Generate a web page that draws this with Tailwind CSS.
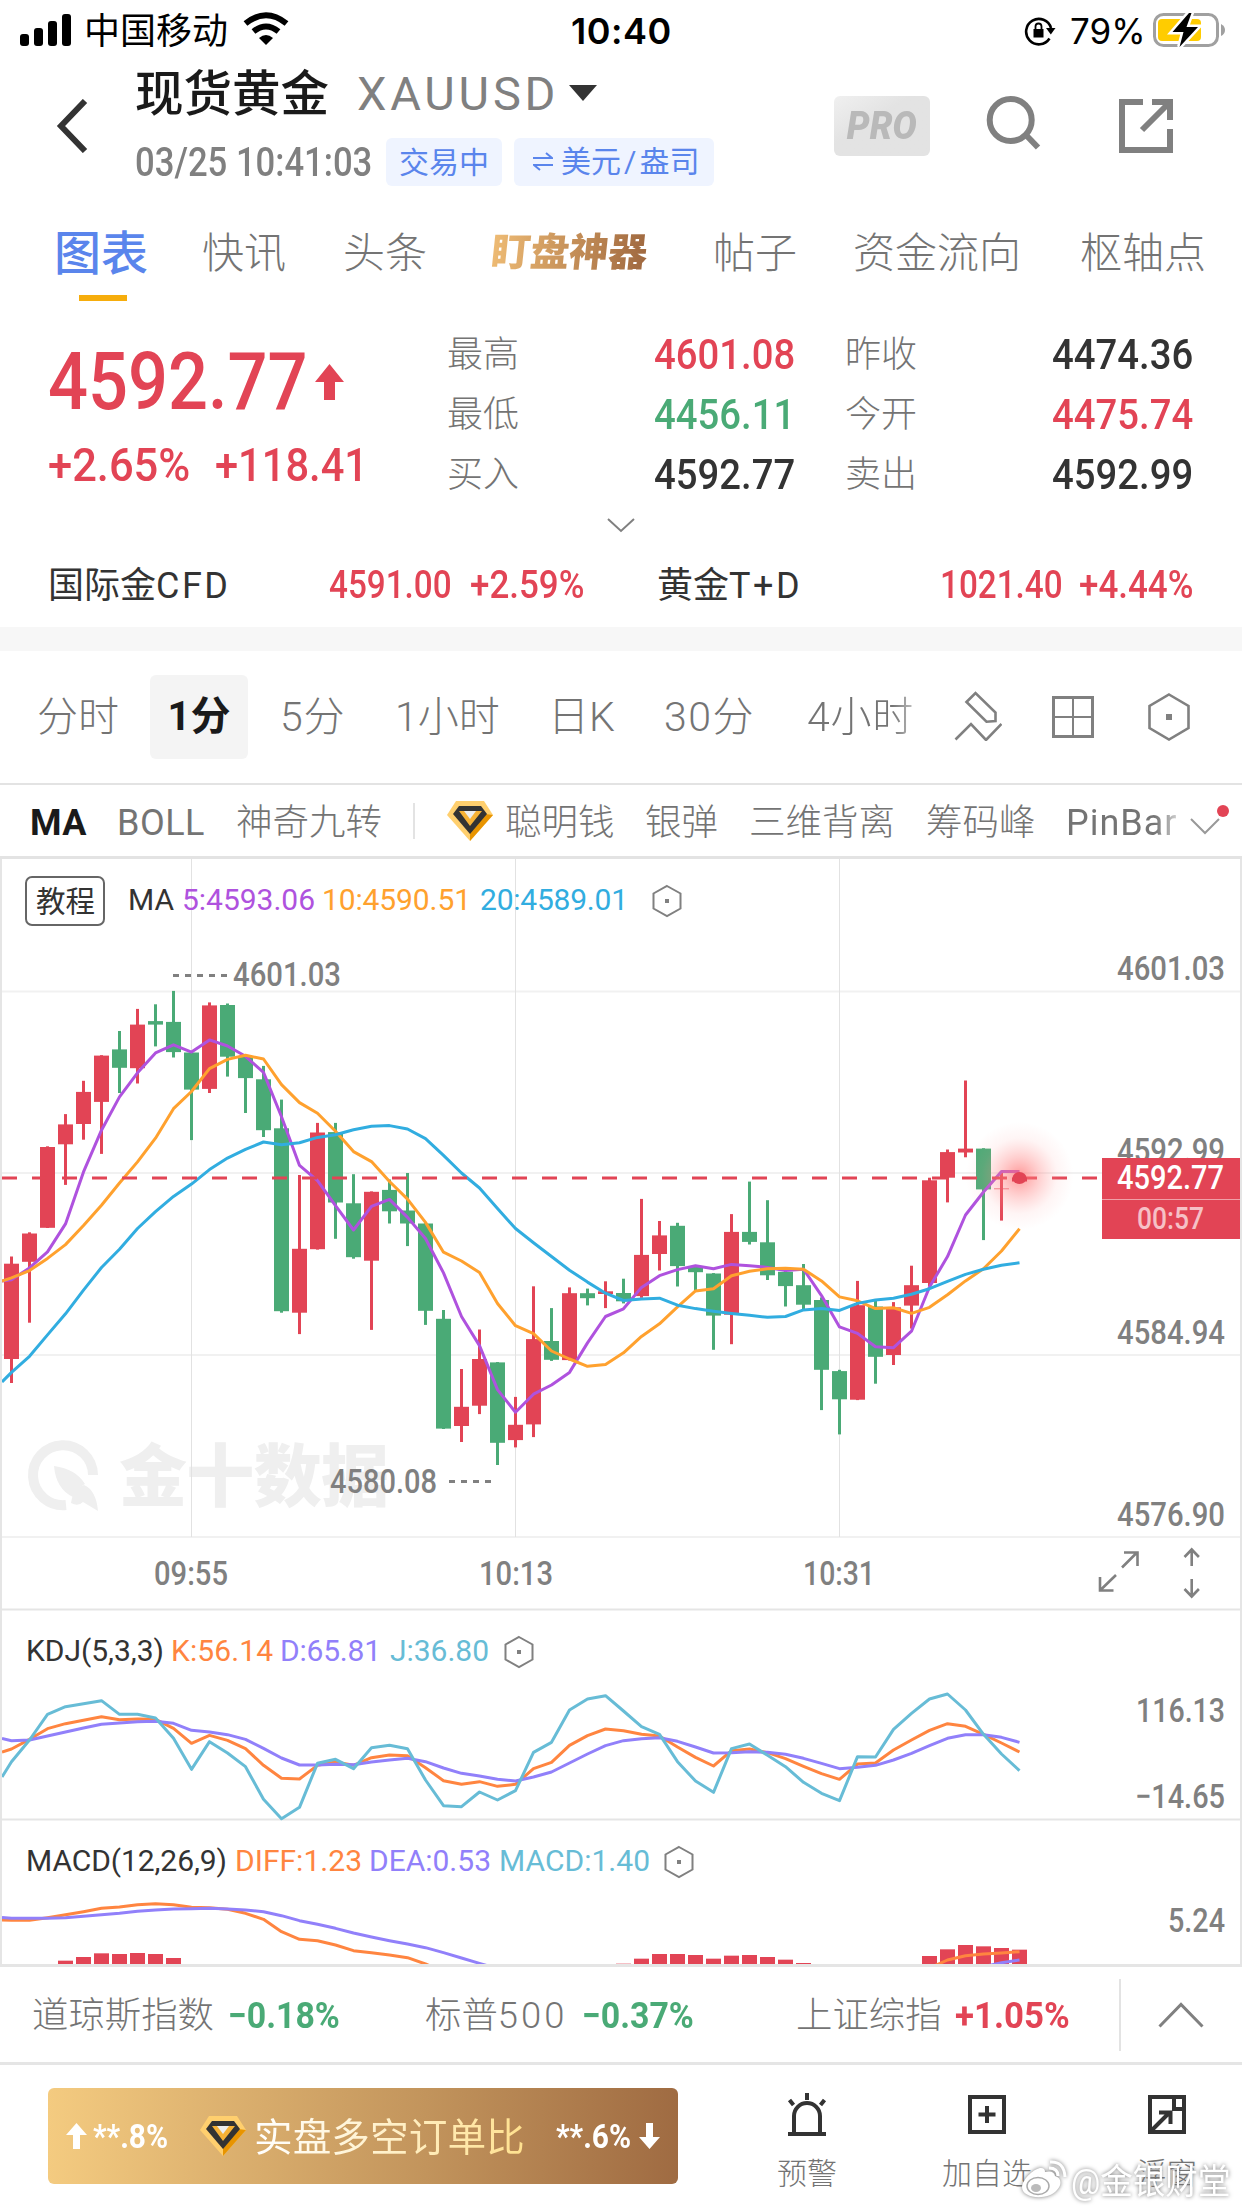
<!DOCTYPE html>
<html lang="zh-CN">
<head>
  <meta charset="UTF-8">
  <meta name="viewport" content="width=device-width, initial-scale=1.0">
  <title>现货黄金 XAUUSD</title>
  <script src="https://cdn.jsdelivr.net/npm/@tailwindcss/browser@4"></script>
</head>
<body class="bg-white w-[1242px] h-[2208px] overflow-hidden whitespace-nowrap text-[#808080] font-['Roboto','Noto_Sans_CJK_SC',sans-serif]">

  <!-- Status bar -->
  <div class="h-[62px] flex items-center text-black">
    <svg class="w-[51px] h-8 ml-5 -mt-0.5" viewBox="0 0 51 32">
      <rect x="0" y="20" width="9" height="12" rx="3"/><rect x="14" y="14" width="9" height="18" rx="3"/>
      <rect x="28" y="7" width="9" height="25" rx="3"/><rect x="42" y="0" width="9" height="32" rx="3"/>
    </svg>
    <span class="w-[144px] ml-[13px] mt-0.5 text-[36px] leading-[62px]">中国移动</span>
    <svg class="w-[46px] h-[34px] ml-[15px] -mt-1" viewBox="0 0 46 34" fill="none" stroke="#000" stroke-width="6">
      <path d="M2.500 11.500Q23 -5 43.500 11.500"/><path d="M10.500 19.500Q23 9.500 35.500 19.500"/><path d="M16 26Q23 20 30 26L23 33Z" fill="#000" stroke="none"/>
    </svg>
    <span class="w-[100px] ml-[282px] text-[36px] font-semibold font-['Inter'] tracking-[.5px]">10:40</span>
    <svg class="w-8 h-[30px] ml-[353px]" viewBox="0 0 32 30" fill="none" stroke="#000" stroke-width="2.600">
      <path d="M25.500 22.500A12.700 12.700 0 1 1 27 12"/><path d="M22 12h9.500l-4.700 6.500z" fill="#000" stroke="none"/>
      <rect x="9.500" y="13" width="10" height="8.500" fill="#000" stroke="none"/><path d="M11.500 13v-2.500a3 3 0 0 1 6 0V13" stroke-width="1.800"/>
    </svg>
    <span class="w-[76px] ml-[14px] text-[35px] font-['Inter']">79%</span>
    <svg class="w-[74px] h-9 ml-[6px] -mt-0.5" viewBox="0 0 74 36">
      <rect x="2.500" y="2.500" width="63" height="31" rx="9" fill="none" stroke="#a0a0a0" stroke-width="3"/>
      <path d="M69 12q4 2 4 6t-4 6z" fill="#a0a0a0"/>
      <rect x="6" y="7" width="43" height="22" rx="4" fill="#ffcc00"/>
      <path d="M37 1L20.500 20h11L27.500 35 46 15H34.500L39.500 1z" fill="#000" stroke="#fff" stroke-width="5" paint-order="stroke"/>
    </svg>
  </div>

  <!-- Header -->
  <header class="h-[134px] flex">
    <svg class="w-8 h-[54px] ml-[56px] mt-[37px]" viewBox="0 0 32 54"><path d="M29 2L5 27l24 25" fill="none" stroke="#333" stroke-width="6"/></svg>
    <div class="w-[600px] ml-[47px]">
      <div class="flex items-center h-[62px]">
        <span class="w-[222px] pt-1 text-[48.500px] font-medium text-[#1a1a1a]">现货黄金</span>
        <span class="w-[212px] pt-0.5 text-[47px] tracking-[3.800px] font-normal">XAUUSD</span>
        <svg class="w-7 h-4" viewBox="0 0 28 16"><path d="M0 0h28L14 16z" fill="#333"/></svg>
      </div>
      <div class="flex items-center h-[48px] mt-[14px]">
        <span class="w-[251px] pt-0.5 origin-left scale-x-[.866] text-[40px] font-medium">03/25 10:41:03</span>
        <span class="w-[116px] h-12 rounded-md bg-[#eff4ff] text-[#5a85ec] text-[30px] leading-[50px] text-center">交易中</span>
        <span class="w-[200px] h-12 ml-3 rounded-md bg-[#eff4ff] text-[#5a85ec] text-[30px] leading-[50px] flex items-center">
          <svg class="w-5 h-5 ml-[19px] mr-[8px]" viewBox="0 0 20 20" fill="none" stroke="#5a85ec" stroke-width="2"><path d="M0 6h19l-6-5M20 13H1l6 5"/></svg>美元<span class="mx-[3px]">/</span>盎司
        </span>
      </div>
    </div>
    <div class="w-24 h-[60px] mt-[34px] ml-[99px] rounded-md bg-linear-to-br from-[#f0f0f0] via-[#e3e3e3] via-40% to-[#e3e3e3] text-[#b9b9b9] text-[38px] leading-[60px] text-center"><span class="inline-block scale-x-95 font-black italic">PRO</span></div>
    <svg class="w-[56px] h-[56px] ml-[56px] mt-[33px]" viewBox="0 0 56 56" fill="none" stroke="#808080" stroke-width="6"><circle cx="24.700" cy="25" r="21"/><path d="M39.500 39.500L52 52.500"/></svg>
    <svg class="w-[54px] h-[54px] ml-[77px] mt-[37px]" viewBox="0 0 54 54" fill="none" stroke="#808080" stroke-width="6"><path d="M24 3H3v48h48V30M33 3h18v18M23 31L50 4"/></svg>
  </header>

  <!-- Tabs -->
  <nav class="h-[104px] flex text-[42px] font-light leading-[115px] text-[#747474]">
    <div class="w-[146px] pl-[54px]">
      <span class="text-[47px] font-medium text-[#5a85ec]">图表</span>
      <div class="w-12 h-1.5 ml-[25px] -mt-[18px] bg-[#f6ad0c]"></div>
    </div>
    <span class="w-[84px] ml-[56px]">快讯</span>
    <span class="w-[84px] ml-[57px]">头条</span>
    <span class="w-[165px] ml-[65px] text-[39px] font-black -skew-x-6 bg-linear-to-r from-[#eebb74] to-[#9b643d] bg-clip-text text-transparent">盯盘神器</span>
    <span class="w-[84px] ml-[56px]">帖子</span>
    <span class="w-[168px] ml-[56px]">资金流向</span>
    <span class="w-[126px] ml-[59px]">枢轴点</span>
  </nav>

  <!-- Quote -->
  <section class="h-[242px] flex pt-[24px] text-[#e24455]">
    <div class="w-[447px] pl-[48px]">
      <div class="flex h-[116px] items-center">
        <span class="w-[267px] origin-left scale-x-[.88] text-[80px] font-medium">4592.77</span>
        <svg class="w-[29px] h-9" viewBox="0 0 29 36"><path d="M14.500 0L29 18H20v18H9V18H0z" fill="#e24455"/></svg>
      </div>
      <div class="flex h-[50px] items-center text-[46px] font-medium">
        <span class="w-[167px] origin-left scale-x-[.945]">+2.65%</span>
        <span class="w-[150px] origin-left scale-x-[.905]">+118.41</span>
      </div>
    </div>
    <div class="grid grid-cols-[207px_191px_207px_150px] auto-rows-[60px] items-center text-[43px] font-medium">
      <span class="pt-0.5 text-[36px] font-light text-[#747474]">最高</span><span class="origin-left scale-x-[.89]">4601.08</span>
      <span class="pt-0.5 text-[36px] font-light text-[#747474]">昨收</span><span class="origin-left scale-x-[.89] text-[#333]">4474.36</span>
      <span class="pt-0.5 text-[36px] font-light text-[#747474]">最低</span><span class="origin-left scale-x-[.89] text-[#4aaa76]">4456.11</span>
      <span class="pt-0.5 text-[36px] font-light text-[#747474]">今开</span><span class="origin-left scale-x-[.89]">4475.74</span>
      <span class="pt-0.5 text-[36px] font-light text-[#747474]">买入</span><span class="origin-left scale-x-[.89] text-[#333]">4592.77</span>
      <span class="pt-0.5 text-[36px] font-light text-[#747474]">卖出</span><span class="origin-left scale-x-[.89] text-[#333]">4592.99</span>
    </div>
  </section>
  <div class="h-[85px] pt-0.5 flex items-center relative text-[38px] font-medium text-[#e24455]">
    <svg class="w-7 h-[15px] absolute left-[607px] -top-[24px]" viewBox="0 0 28 15"><path d="M1 1l13 12L27 1" fill="none" stroke="#808080" stroke-width="2"/></svg>
    <span class="w-[281px] ml-[48px] text-[36px] font-normal text-[#333]">国际金<span class="tracking-[2.500px]">CFD</span></span>
    <span class="w-[141px] origin-left scale-x-[.875]">4591.00</span>
    <span class="w-[187px] origin-left scale-x-[.92]">+2.59%</span>
    <span class="w-[283px] text-[36px] font-normal text-[#333]">黄金<span class="tracking-[2.500px]">T+D</span></span>
    <span class="w-[139px] origin-left scale-x-[.875]">1021.40</span>
    <span class="w-[114px] origin-left scale-x-[.92]">+4.44%</span>
  </div>
  <div class="h-6 bg-[#f7f7f7]"></div>

  <!-- Periods -->
  <div class="h-[134px] border-b-2 border-[#e3e3e3] flex items-center text-[41px] font-light text-[#747474]">
    <span class="w-[82px] ml-[37px] pt-0.5">分时</span>
    <span class="w-[98px] h-[84px] ml-[31px] rounded-md bg-[#f4f4f4] text-center leading-[84px] font-bold text-[#1a1a1a] text-[40px]">1分</span>
    <span class="w-[66px] ml-[32px] pt-0.5 tracking-[.8px]">5分</span>
    <span class="w-[106px] ml-[49px] pt-0.5">1小时</span>
    <span class="w-[66px] ml-[47px] pt-0.5">日K</span>
    <span class="w-[94px] ml-[50px] pt-0.5 tracking-[1.500px]">30分</span>
    <span class="w-[114px] ml-[49px] pt-0.5 tracking-[.8px] bg-linear-to-r from-[#747474] from-75% to-[#ddd] bg-clip-text text-transparent">4小时</span>
    <svg class="w-12 h-[50px] ml-[33px] -mt-0.5" viewBox="0 0 48 50" fill="none" stroke="#808080" stroke-width="2.600">
      <path d="M1.500 48.500L17 33l15 16L47.500 33M12.500 11L21.500 2 41.500 21.500V30l-9 .7z"/>
    </svg>
    <svg class="w-[42px] h-[42px] ml-[50px]" viewBox="0 0 42 42" fill="none" stroke="#808080"><path d="M1.500 1.500h39v39h-39z" stroke-width="3"/><path d="M21 2v38M2 21h38" stroke-width="2"/></svg>
    <svg class="w-[42px] h-[48px] ml-[54px]" viewBox="0 0 42 48" fill="none" stroke="#808080" stroke-width="2.600"><path d="M21 1.500L40.500 13v22L21 46.500 1.500 35V13z"/><path d="M18 21h6v6h-6z" fill="#808080" stroke="none"/></svg>
  </div>

  <!-- Indicators -->
  <div class="h-[74px] border-b-3 border-[#e3e3e3] flex items-center text-[36.500px] font-light text-[#747474]">
    <span class="w-[60px] ml-[30px] pt-1 text-[36px] font-bold tracking-[.5px] text-[#1a1a1a]">MA</span>
    <span class="w-[90px] ml-[27px] pt-1 text-[36px] font-normal tracking-[.5px]">BOLL</span>
    <span class="w-[146px] ml-[29px] pt-[5px]">神奇九转</span>
    <span class="w-0.5 h-9 ml-[31px] bg-[#e3e3e3]"></span>
    <svg class="w-[46px] h-10 ml-[32px]" viewBox="0 0 46 40">
      <path d="M9 0h28l9 14-23 26L0 14z" fill="#ffcf6e"/><path d="M46 14L23 40V30L38 13z" fill="#e89400"/>
      <path d="M12 5h22l6 8-17 20L6 13z" fill="#333"/><path d="M12 10h6l5 7 5-7h7L23 25z" fill="#f7b236"/><path d="M17 10h12l-6 8z" fill="#eee"/>
    </svg>
    <span class="w-[110px] ml-[12px] pt-[5px]">聪明钱</span>
    <span class="w-[74px] ml-[30px] pt-[5px]">银弹</span>
    <span class="w-[146px] ml-[30px] pt-[5px]">三维背离</span>
    <span class="w-[110px] ml-[31px] pt-[5px]">筹码峰</span>
    <span class="w-[118px] ml-[30px] pt-1 text-[36px] font-normal tracking-[1px] bg-linear-to-r from-[#747474] from-75% to-[#eee] bg-clip-text text-transparent">PinBar</span>
    <svg class="w-[40px] h-[32px] ml-[6px] -mt-2.500" viewBox="0 0 40 32"><path d="M1 14l14 14 14-14" fill="none" stroke="#999" stroke-width="2"/><circle cx="33" cy="6" r="6" fill="#e24455"/></svg>
  </div>

  <!-- Charts: price, KDJ, MACD -->
  <svg id="chart" class="block w-full h-[1108px]" viewBox="0 859 1242 1108" fill="none">
    <defs>
      <radialGradient id="glow"><stop offset="0" stop-color="#ff6b6b" stop-opacity=".7"/><stop offset=".35" stop-color="#ff8080" stop-opacity=".38"/><stop offset=".7" stop-color="#ff9a9a" stop-opacity=".1"/><stop offset="1" stop-color="#ff9a9a" stop-opacity="0"/></radialGradient>
      <clipPath id="plot"><rect x="2" y="859" width="1238" height="1106"/></clipPath>
      <g id="hex" stroke="#808080"><path d="M0 -15L13.500 -7.500V7.500L0 15L-13.500 7.500V-7.500z" stroke-width="2"/><path d="M-2 -2h4v4h-4z" fill="#808080" stroke="none"/></g>
    </defs>

    <!-- brand watermark -->
    <g fill="#efefef">
      <path d="M93 1475A30 30 0 1 0 66 1505" fill="none" stroke="#efefef" stroke-width="10"/>
      <path d="M54 1466q22 3 31 18q-7 3-12 13q-17-8-19-31z"/><path d="M71 1503q2-15 13-18q12 5 14 26l-15-9q-5 5-12 1z"/>
      <text x="119" y="1501" font-size="68" font-weight="900" textLength="270">金十数据</text>
    </g>

    <g stroke="#f1f1f1" stroke-width="2"><path d="M2 991.500H1240M2 1173H1240M2 1355H1240M2 1537H1240"/></g>
    <g stroke="#e2e2e2" stroke-width="1"><path d="M191.500 859V1537M515.500 859V1537M839.500 859V1537"/></g>
    <g stroke="#e5e5e5" stroke-width="2"><path d="M1 859V1966M1241 859V1966"/><path d="M0 1609.500H1242M0 1819.500H1242"/></g>

    <g id="candles"></g>
    <g id="lines" clip-path="url(#plot)" stroke-width="3" stroke-linejoin="round"></g>
    <path d="M2 1178H1102" stroke="#e24455" stroke-width="3" stroke-dasharray="15 15"/>
    <circle cx="1019.500" cy="1176" r="54" fill="url(#glow)"/>
    <ellipse cx="1019.500" cy="1178" rx="7" ry="6" fill="#e24455"/><path d="M1012 1179.500h15" stroke="#e24455" stroke-width="4"/>
    <path d="M0 1965.500H1242" stroke="#e5e5e5" stroke-width="3"/>

    <!-- legends -->
    <rect x="26" y="877" width="78" height="48" rx="6" stroke="#666" stroke-width="2" fill="#fff"/>
    <text x="36" y="912" font-size="29.500" fill="#333">教程</text>
    <g font-size="30">
      <text x="128" y="910" fill="#333" textLength="46">MA</text>
      <text x="182" y="910" fill="#af52de" textLength="133">5:4593.06</text>
      <text x="322" y="910" fill="#ffa12e" textLength="149">10:4590.51</text>
      <text x="480" y="910" fill="#31ade0" textLength="148">20:4589.01</text>
      <use href="#hex" x="667" y="901"/>
      <text x="26" y="1661" fill="#333" textLength="138">KDJ(5,3,3)</text>
      <text x="171" y="1661" fill="#ff8540" textLength="102">K:56.14</text>
      <text x="280" y="1661" fill="#9180fa" textLength="101">D:65.81</text>
      <text x="390" y="1661" fill="#67bcd6" textLength="99">J:36.80</text>
      <use href="#hex" x="519" y="1652"/>
      <text x="26" y="1871" fill="#333" textLength="201">MACD(12,26,9)</text>
      <text x="235" y="1871" fill="#ff8540" textLength="127">DIFF:1.23</text>
      <text x="369" y="1871" fill="#9180fa" textLength="122">DEA:0.53</text>
      <text x="499" y="1871" fill="#67bcd6" textLength="151">MACD:1.40</text>
      <use href="#hex" x="679" y="1862"/>
    </g>

    <!-- axis labels -->
    <g font-size="34" font-weight="500" fill="#808080">
      <text x="1117" y="980" textLength="108" lengthAdjust="spacingAndGlyphs">4601.03</text>
      <text x="1117" y="1162" textLength="108" lengthAdjust="spacingAndGlyphs">4592.99</text>
      <text x="1117" y="1344" textLength="108" lengthAdjust="spacingAndGlyphs">4584.94</text>
      <text x="1117" y="1526" textLength="108" lengthAdjust="spacingAndGlyphs">4576.90</text>
      <text x="1136" y="1722" textLength="89" lengthAdjust="spacingAndGlyphs">116.13</text>
      <text x="1135" y="1808" textLength="90" lengthAdjust="spacingAndGlyphs">−14.65</text>
      <text x="1168" y="1932" textLength="57" lengthAdjust="spacingAndGlyphs">5.24</text>
      <text x="154" y="1585" textLength="74" lengthAdjust="spacingAndGlyphs">09:55</text>
      <text x="479" y="1585" textLength="74" lengthAdjust="spacingAndGlyphs">10:13</text>
      <text x="803" y="1585" textLength="72" lengthAdjust="spacingAndGlyphs">10:31</text>
      <text x="233" y="986" textLength="108" lengthAdjust="spacingAndGlyphs">4601.03</text>
      <text x="330" y="1493" textLength="107" lengthAdjust="spacingAndGlyphs">4580.08</text>
      <path d="M173 975.500h56M449 1481.500h43" stroke="#808080" stroke-width="3" stroke-dasharray="6 6"/>
      <rect x="1102" y="1158" width="138" height="81" fill="#e24455"/>
      <path d="M1102 1199.500h138" stroke="#f0a0a8" stroke-width="1"/>
      <text x="1117" y="1189" fill="#fff" textLength="107" lengthAdjust="spacingAndGlyphs">4592.77</text>
      <text x="1137" y="1229" fill="#f6c0c6" font-size="32" textLength="67" lengthAdjust="spacingAndGlyphs">00:57</text>
    </g>
    <g stroke="#808080" stroke-width="2.600">
      <path d="M1122 1567.500L1137 1552.500M1124 1552.500h13.500V1566M1116 1575L1100.500 1590M1100 1577v13.500h13.500"/>
      <path d="M1191.700 1550v16M1184.500 1557l7.200-7.500 7.200 7.500M1191.700 1579v17M1184.500 1589l7.200 7.500 7.200-7.500"/>
    </g>
  </svg>

  <!-- Index ticker -->
  <div class="h-[98px] border-b-3 border-[#e5e5e5] flex items-center text-[36.400px] font-light text-[#747474]">
    <span class="w-[182px] ml-[32px] pt-1">道琼斯指数</span>
    <span class="w-[112px] ml-[14px] pt-[3px] origin-left scale-x-[.915] text-[37px] font-bold text-[#4aaa76]">−0.18%</span>
    <span class="w-[142px] ml-[85px] pt-1">标普<span class="tracking-[3px]">500</span></span>
    <span class="w-[112px] ml-[15px] pt-[3px] origin-left scale-x-[.915] text-[37px] font-bold text-[#4aaa76]">−0.37%</span>
    <span class="w-[146px] ml-[102px] pt-1">上证综指</span>
    <span class="w-[112px] ml-[13px] pt-[3px] origin-left scale-x-[.94] text-[37px] font-bold text-[#e24455]">+1.05%</span>
    <span class="w-0.5 h-[72px] ml-[52px] bg-[#e3e3e3]"></span>
    <svg class="w-[46px] h-[26px] ml-[37px]" viewBox="0 0 46 26"><path d="M1.500 24.500L23 2.500l21.500 22" fill="none" stroke="#808080" stroke-width="3"/></svg>
  </div>

  <!-- Bottom bar -->
  <footer class="h-[143px] flex relative text-[30px] font-light text-[#747474]">
    <div class="w-[630px] h-24 ml-[48px] mt-[23px] rounded-md bg-linear-to-r from-[#f4cb80] via-[#c2945c] via-60% to-[#9f6b42] flex items-center text-white text-[34px] font-bold">
      <svg class="w-[21px] h-[26px] ml-[18px]" viewBox="0 0 21 26"><path d="M10.500 0L21 12H14v14H7V12H0z" fill="#fff"/></svg>
      <span class="w-[104px] ml-[6px] origin-left scale-x-[.88]">**.8%</span>
      <svg class="w-[46px] h-10 ml-[3px]" viewBox="0 0 46 40">
        <path d="M9 0h28l9 14-23 26L0 14z" fill="#ffcf6e"/><path d="M46 14L23 40V30L38 13z" fill="#e89400"/>
        <path d="M12 5h22l6 8-17 20L6 13z" fill="#333"/><path d="M12 10h6l5 7 5-7h7L23 25z" fill="#f7b236"/><path d="M17 10h12l-6 8z" fill="#eee"/>
      </svg>
      <span class="w-[274px] ml-[8px] pt-1 text-[38.700px] font-normal bg-linear-to-r from-white to-[#ffe08c] bg-clip-text text-transparent">实盘多空订单比</span>
      <span class="w-[74px] ml-[28px] origin-left scale-x-[.88]">**.6%</span>
      <svg class="w-[21px] h-[26px] ml-[9px]" viewBox="0 0 21 26"><path d="M10.500 26L21 14H14V0H7v14H0z" fill="#fff"/></svg>
    </div>
    <div class="w-[120px] ml-[69px] pt-[26px] flex flex-col items-center">
      <svg class="w-10 h-[46px] mb-[14px]" viewBox="0 0 40 46" fill="none" stroke="#333" stroke-width="4"><path d="M1 43h38M7 42V25a13 13 0 0 1 26 0v17M20 2v7M2.500 9l4 5M37.500 9l-4 5"/></svg>
      <span class="leading-[46px]">预警</span>
    </div>
    <div class="w-[120px] ml-[60px] pt-[26px] flex flex-col items-center">
      <svg class="w-10 h-[46px] mb-[14px]" viewBox="0 0 40 46" fill="none" stroke="#333" stroke-width="4"><path d="M3 6h34v35H3z"/><path d="M20 15v17M11.500 23.500h17"/></svg>
      <span class="leading-[46px]">加自选</span>
    </div>
    <div class="w-[120px] ml-[60px] pt-[26px] flex flex-col items-center">
      <svg class="w-10 h-[46px] mb-[14px]" viewBox="0 0 40 46" fill="none" stroke="#333" stroke-width="4"><path d="M3 6h34v35H3z"/><path d="M27 7v11h10M5 39l17-17M12 21.500h11.500V33"/></svg>
      <span class="leading-[46px]">浮窗</span>
    </div>
    <!-- poster's mark over the bar -->
    <div class="absolute left-[1020px] top-[88px] flex items-center font-normal text-[35px] text-white drop-shadow-[0_0_2px_#777]">
      <svg class="w-[48px] h-[42px] mr-[3px]" viewBox="0 0 48 42">
        <path d="M2 27C3 18 15 8 21 8q4 0 4 4q9-2 10 4c7 2 7 9 2 14C28 41 2 39 2 27z" fill="#fff"/>
        <ellipse cx="18" cy="26" rx="11" ry="8.500" stroke="#aaa" stroke-width="1.500" fill="none"/><ellipse cx="16" cy="28" rx="5" ry="4" fill="#bbb"/>
        <path d="M30 2q14-1 15 15M29 8q9 0 9 8" fill="none" stroke="#fff" stroke-width="3"/>
      </svg>
      <span class="w-[160px] pt-1 origin-left scale-x-[.93]">@金银财堂</span>
    </div>
  </footer>

<script>
  const RED = '#e24455', GREEN = '#4aaa76';
  const x = i => 11.5 + 18 * i;

  // [up, high, body top, body bottom, low]
  const candles = [
    [1,1256.5,1263.7,1359,1383],[1,1232.3,1233.5,1261.8,1322.7],[1,1146.3,1147,1227.8,1228],[1,1114.1,1124.4,1144.3,1184.9],
    [1,1080.8,1091.9,1124,1139.7],[1,1055.2,1055.6,1101.9,1153.9],[0,1031,1049.4,1067.8,1093],[1,1008.9,1024.6,1068.2,1083.5],
    [0,1004.3,1021.1,1024.6,1046.4],[0,990.9,1021.9,1052.1,1057.5],[0,1052.1,1052.5,1089.6,1140.1],[1,1002.4,1005.4,1088.9,1093],
    [0,1003.5,1005,1056.7,1076.6],[0,1056.3,1056.7,1078.1,1113],[0,1065.9,1079.3,1130.2,1137],[0,1099.6,1128.3,1311.2,1312.7],
    [1,1175,1248.8,1312.7,1334.1],[1,1122.9,1132.5,1249.2,1249.6],[0,1122.9,1132.1,1202.5,1238.8],[0,1174.2,1203.3,1257.2,1258.7],
    [1,1191.4,1191.8,1260.7,1329.9],[0,1179.5,1189.9,1211.3,1223.5],[0,1173,1210.5,1223.5,1246.1],[0,1223.2,1223.5,1310.8,1324.9],
    [0,1310,1318.8,1428.6,1429],[1,1369,1406.8,1426,1442],[1,1329.5,1359,1405.7,1414.1],[0,1362.1,1362.4,1442.8,1465],
    [1,1396.9,1424.8,1440.1,1447.4],[1,1286.3,1339.1,1424.4,1437.1],[0,1308.1,1341,1359.8,1360.9],[1,1287.4,1293.2,1360.1,1360.5],
    [0,1288.6,1293.2,1298.2,1305.4],[1,1281.3,1291.3,1294,1308.1],[0,1278.7,1293,1301.3,1303.4],[1,1198.9,1254.9,1296.1,1297.8],
    [1,1221,1235.4,1254,1270.5],[0,1222.8,1225.8,1266.1,1286.5],[0,1266.1,1266.6,1272.2,1290.4],[0,1273.1,1273.5,1315.6,1349.8],
    [1,1214.1,1231.9,1314.7,1344.2],[0,1181.6,1231.9,1241.9,1244.5],[0,1200.2,1242.3,1275.3,1280],[0,1270.9,1271.8,1286.1,1306.5],
    [0,1264,1285.2,1304.7,1309.1],[0,1297.4,1300,1369.8,1410.1],[0,1369.8,1371.1,1399.3,1434.4],[1,1280.9,1305.2,1399.7,1400.1],
    [0,1300.8,1306.5,1356.8,1383.7],[1,1302.1,1307.3,1355,1365],[1,1265.7,1285.2,1305.6,1328.6],[1,1177.7,1180.3,1283,1286.1],
    [1,1149.5,1152.1,1177.7,1202.4],[1,1080.5,1148.6,1152.5,1157.3],[0,1148.2,1148.6,1189.4,1240.1],[1,1172.5,1188.5,1189.2,1220.6]
  ];
  const ma5 = [1279.8,1267.9,1251.9,1223.9,1171.9,1130.2,1096.9,1072.8,1052.9,1044.8,1052.1,1039.9,1046,1056.3,1072.4,1116.8,1165.4,1180.7,1205.6,1230,1206.3,1199.4,1217.4,1238.5,1272.9,1316.5,1345.6,1389.6,1412.2,1394.2,1385,1372.4,1342.9,1316.5,1308.8,1287.4,1275.7,1269.6,1265.7,1268.7,1264.4,1265.7,1267.4,1270.5,1269.2,1295.6,1326.9,1333.4,1346.8,1347.7,1331.2,1287,1256.6,1215,1192,1171.6,1171.6];
  const ma10 = [1277.9,1270.6,1258.4,1244.6,1225.5,1205.2,1183,1161.9,1138.2,1108.7,1091.5,1068.6,1059.4,1055.2,1059,1084.6,1102.6,1113.3,1131.3,1151.6,1161.6,1181.5,1199.1,1222.4,1252.2,1261,1272.5,1303.5,1325.7,1333.7,1351,1359,1366.3,1364.4,1352.8,1336.4,1323.8,1306.9,1290.9,1288.7,1275.7,1271.3,1268.7,1268.3,1269.2,1280.9,1296.9,1300.8,1308.6,1307.8,1313.4,1307.3,1294.8,1280.9,1268.7,1251,1228.8];
  const ma20 = [1372.4,1356.3,1334.9,1313.8,1290.1,1267.5,1249.2,1228.5,1211.7,1196.4,1184.1,1169.6,1158.1,1149.3,1142,1144.7,1142.8,1137.4,1134.8,1129.8,1126.3,1125.6,1129,1138.6,1155.4,1173,1188,1208.6,1228.5,1242.7,1256.5,1270.2,1282.1,1293.2,1300.5,1299.1,1298.2,1305.2,1308.6,1311.2,1313.4,1315.2,1317.3,1316.5,1309.9,1308.6,1310.4,1303.4,1300,1298.2,1294.3,1288.7,1281.3,1274.4,1269.2,1265.3,1262.7];

  // sub charts, in thirds of a pixel below 1600
  const sub = v => 1600 + v / 3;
  const k = [447,418,386,371,361,350,359,357,358,385,430,406,421,446,496,535,537,496,486,496,473,465,467,503,542,553,545,559,553,506,487,436,407,387,392,403,408,441,472,498,452,447,458,476,499,521,538,492,489,450,420,391,371,379,403,429,456];
  const d = [422,420,408,396,384,373,369,365,364,370,391,396,404,418,445,474,495,495,493,494,486,480,475,485,504,520,528,538,543,531,516,489,462,437,422,416,413,424,441,459,458,455,457,463,475,490,506,502,496,480,460,437,415,404,404,412,427];
  const j = [485,420,343,320,311,302,343,343,354,415,508,425,459,500,598,656,622,490,478,506,443,436,446,540,617,620,576,600,572,457,427,330,297,287,333,380,403,485,543,577,446,432,466,500,547,580,602,470,471,388,340,297,282,330,403,462,512];
  const diff = [961,961,953,944,935,925,921,914,911,914,922,923,928,940,958,995,1018,1022,1035,1052,1058,1065,1073,1092,1115];
  const dea = [955,955,955,953,949,944,940,934,930,927,926,925,927,930,935,947,962,973,985,999,1011,1022,1032,1043,1058,1074,1090,1106];
  const bars = {3:1082,4:1071,5:1060,6:1062,7:1059,8:1062,9:1074,34:1091,35:1076,36:1062,37:1062,38:1065,39:1076,40:1067,41:1065,42:1071,43:1079,44:1089,51:1068,52:1048,53:1035,54:1039,55:1044,56:1049};

  let out = '';
  candles.forEach(([up, h, t, b, l], i) => {
    const c = up ? RED : GREEN;
    out += `<path d="M${x(i)} ${h}V${l}" stroke="${c}" stroke-width="3"/><rect x="${x(i) - 7.5}" y="${t}" width="15" height="${Math.max(b - t, .7)}" fill="${c}"/>`;
  });
  for (const i in bars) {
    out += `<rect x="${x(+i) - 7.5}" y="${sub(bars[i])}" width="15" height="${1965 - sub(bars[i])}" fill="${RED}"/>`;
  }
  document.getElementById('candles').innerHTML = out;

  const line = (pts, color, start, from = 0) =>
    `<polyline stroke="${color}" points="${start ? '2,' + start + ' ' : ''}${pts.map((p, i) => x(i + from) + ',' + p).join(' ')}"/>`;
  document.getElementById('lines').innerHTML =
    line(ma5, '#af52de', 1281) + line(ma10, '#ffa12e', 1281) + line(ma20, '#31ade0', 1382) +
    line(k.map(sub), '#ff8540', 1752) + line(d.map(sub), '#9180fa', 1738.5) + line(j.map(sub), '#67bcd6', 1777) +
    line(diff.map(sub), '#ff8540', 1920) + line(dea.map(sub), '#9180fa', 1917.5) +
    line([1104,1080,1067,1062,1059,1055].map(sub), '#ff8540', 0, 51) + line([1100,1088,1080].map(sub), '#9180fa', 0, 54);
</script>
</body>
</html>
